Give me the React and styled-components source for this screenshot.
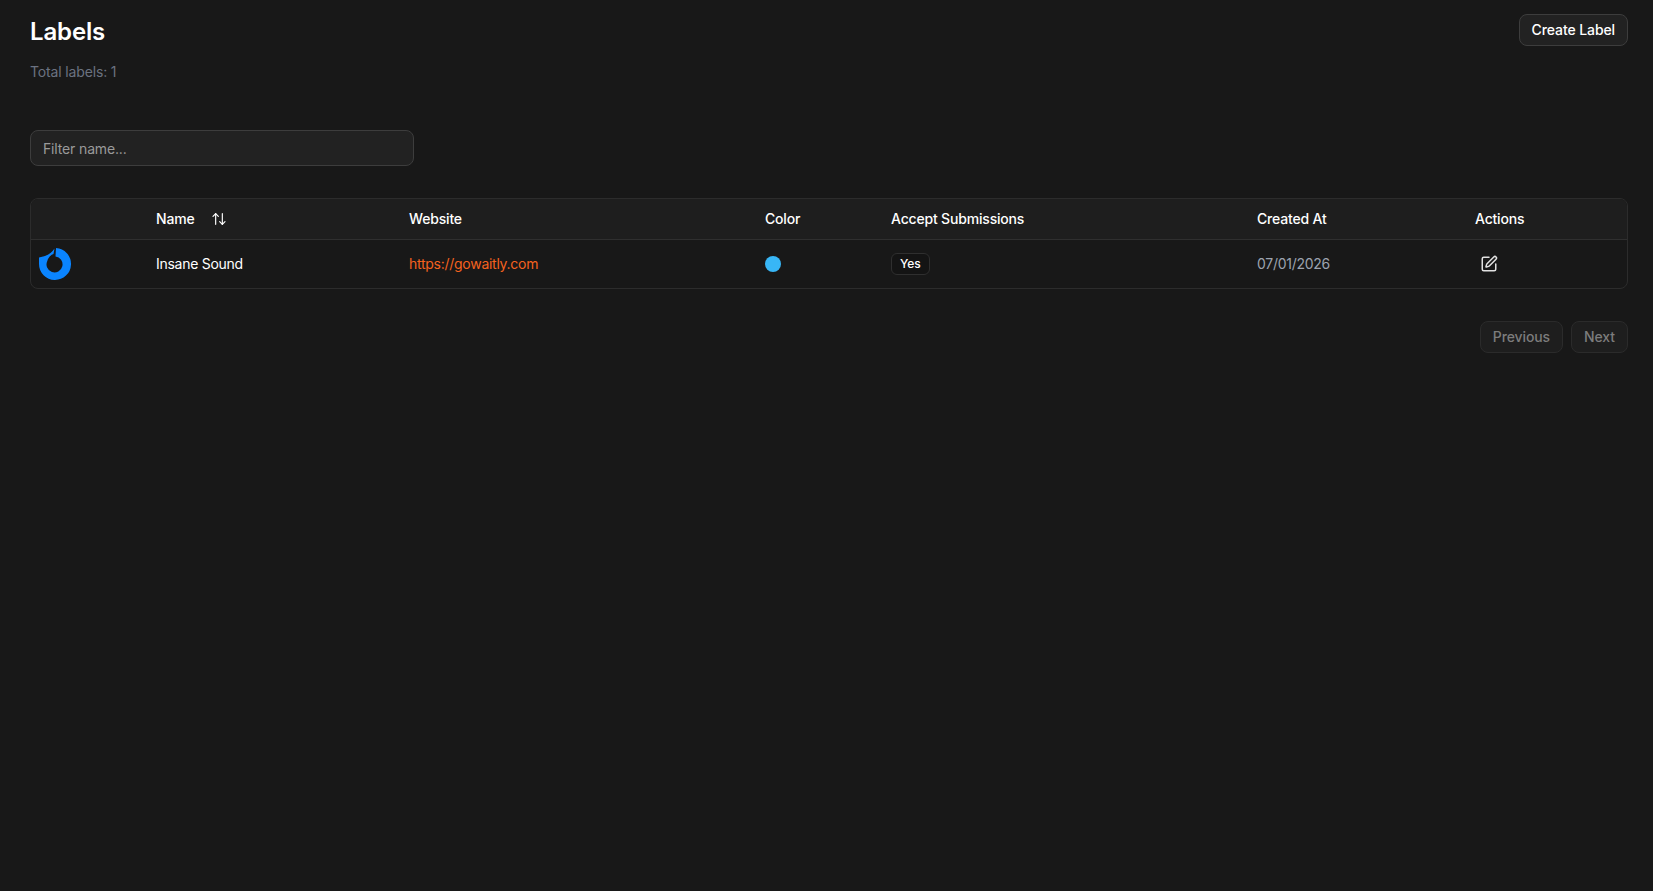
import React from 'react'
import styled, { createGlobalStyle } from 'styled-components'
import { ArrowUpDown, SquarePen } from 'lucide-react'

const GlobalStyle = createGlobalStyle`
  html, body {
    margin: 0;
    background: #181818;
    color: #fff;
    font-family: Inter, "Noto Sans", sans-serif;
    -webkit-font-smoothing: antialiased;
  }
`

const Page = styled.div`
  min-height: 891px;
  box-sizing: border-box;
  padding: 14px 25px 0 30px;
`

const Header = styled.div`
  display: flex;
  justify-content: space-between;
  align-items: flex-start;
`

const Title = styled.h1`
  margin: 0;
  padding-top: 2px;
  font-size: 24px;
  line-height: 32px;
  font-weight: 600;
  letter-spacing: -0.15px;
`

const Subtitle = styled.p`
  margin: 14px 0 0;
  font-size: 14px;
  line-height: 20px;
  letter-spacing: -0.15px;
  color: #6b7280;
`

const Button = styled.button`
  box-sizing: border-box;
  height: 32px;
  padding: 0 12px 2px;
  border: 1px solid ${props => (props.disabled ? '#2b2b2b' : '#3d3d3d')};
  border-radius: 8px;
  background: ${props => (props.disabled ? '#1e1e1e' : '#222222')};
  color: ${props => (props.disabled ? '#7c7c7c' : '#ffffff')};
  font-family: inherit;
  font-size: 14px;
  font-weight: 500;
  letter-spacing: -0.1px;
`

const FilterInput = styled.input`
  display: block;
  box-sizing: border-box;
  width: 384px;
  height: 36px;
  margin-top: 48px;
  padding: 0 12px;
  border: 1px solid #3d3d3d;
  border-radius: 8px;
  background: #222222;
  color: #fff;
  font-family: inherit;
  font-size: 14px;
  letter-spacing: -0.15px;
  outline: none;
  &::placeholder {
    color: #9a9a9a;
    opacity: 1;
  }
`

const TableWrap = styled.div`
  margin-top: 32px;
  border: 1px solid #2c2c2c;
  border-radius: 8px;
  overflow: hidden;
`

const Table = styled.table`
  width: 100%;
  table-layout: fixed;
  border-collapse: collapse;
  font-size: 14px;
`

const HeadRow = styled.tr`
  height: 40px;
  background: #1e1e1e;
  border-bottom: 1px solid #2f2f2f;
`

const Th = styled.th`
  box-sizing: border-box;
  width: ${props => (props.$width ? `${props.$width}px` : 'auto')};
  padding: 0 12px;
  text-align: left;
  font-weight: 500;
  letter-spacing: -0.18px;
  color: #fff;
`

const SortLabel = styled.span`
  display: inline-flex;
  align-items: center;
  gap: 17px;
`

const Row = styled.tr`
  height: 49px;
`

const Td = styled.td`
  padding: 0 12px;
  letter-spacing: -0.27px;
  color: ${props => props.$color || '#fff'};
`

const LogoCell = styled.td`
  padding: 0 8px;
  line-height: 0;
`

const LinkText = styled.a`
  color: #f4621f;
  text-decoration: none;
`

const Dot = styled.span`
  display: block;
  width: 16px;
  height: 16px;
  border-radius: 50%;
  background: #38b6f6;
`

const Badge = styled.span`
  display: inline-block;
  box-sizing: border-box;
  height: 22px;
  padding: 0 8px;
  border: 1px solid #2f2f2f;
  border-radius: 6px;
  background: #141414;
  font-size: 12px;
  font-weight: 500;
  letter-spacing: 0;
  line-height: 20px;
`

const IconButton = styled.span`
  display: inline-flex;
  margin-left: 5px;
  vertical-align: middle;
  color: #e2e2e2;
`

const Pagination = styled.div`
  display: flex;
  justify-content: flex-end;
  gap: 8px;
  margin-top: 32px;
`

const Logo = () => (
  <svg width="32" height="32" viewBox="0 0 32 32">
    <path
      fill="#0a84ff"
      d="M17 0A16 16 0 1 1 0 16V9.5L6 8Q12 6 15.5 .5L14.5 6Q10 7.5 8.3 13A8 8 0 1 0 16.5 8.5Z"
    />
  </svg>
)

const App = () => (
  <Page>
    <GlobalStyle />
    <Header>
      <div>
        <Title>Labels</Title>
        <Subtitle>Total labels: 1</Subtitle>
      </div>
      <Button>Create Label</Button>
    </Header>
    <FilterInput placeholder="Filter name..." />
    <TableWrap>
      <Table>
        <thead>
          <HeadRow>
            <Th $width={113} />
            <Th $width={253}>
              <SortLabel>
                Name
                <ArrowUpDown size={16} strokeWidth={1.75} />
              </SortLabel>
            </Th>
            <Th $width={356}>Website</Th>
            <Th $width={126}>Color</Th>
            <Th $width={366}>Accept Submissions</Th>
            <Th $width={218}>Created At</Th>
            <Th>Actions</Th>
          </HeadRow>
        </thead>
        <tbody>
          <Row>
            <LogoCell>
              <Logo />
            </LogoCell>
            <Td>Insane Sound</Td>
            <Td>
              <LinkText href="#">https://gowaitly.com</LinkText>
            </Td>
            <Td>
              <Dot />
            </Td>
            <Td>
              <Badge>Yes</Badge>
            </Td>
            <Td $color="#9ca3af">07/01/2026</Td>
            <Td>
              <IconButton>
                <SquarePen size={18} strokeWidth={2} />
              </IconButton>
            </Td>
          </Row>
        </tbody>
      </Table>
    </TableWrap>
    <Pagination>
      <Button disabled>Previous</Button>
      <Button disabled>Next</Button>
    </Pagination>
  </Page>
)

export default App
